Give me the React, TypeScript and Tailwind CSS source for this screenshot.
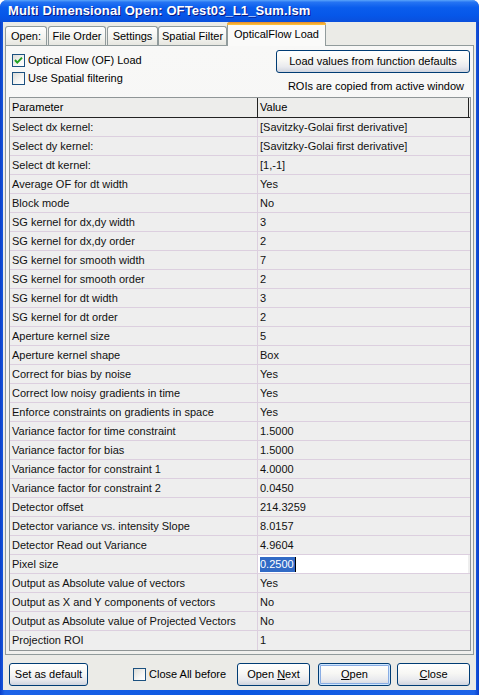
import React from "react";

const rows: [string, string][] = [
  ["Select dx kernel:", "[Savitzky-Golai first derivative]"],
  ["Select dy kernel:", "[Savitzky-Golai first derivative]"],
  ["Select dt kernel:", "[1,-1]"],
  ["Average OF for dt width", "Yes"],
  ["Block mode", "No"],
  ["SG kernel for dx,dy width", "3"],
  ["SG kernel for dx,dy order", "2"],
  ["SG kernel for smooth width", "7"],
  ["SG kernel for smooth order", "2"],
  ["SG kernel for dt width", "3"],
  ["SG kernel for dt order", "2"],
  ["Aperture kernel size", "5"],
  ["Aperture kernel shape", "Box"],
  ["Correct for bias by noise", "Yes"],
  ["Correct low noisy gradients in time", "Yes"],
  ["Enforce constraints on gradients in space", "Yes"],
  ["Variance factor for time constraint", "1.5000"],
  ["Variance factor for bias", "1.5000"],
  ["Variance factor for constraint 1", "4.0000"],
  ["Variance factor for constraint 2", "0.0450"],
  ["Detector offset", "214.3259"],
  ["Detector variance vs. intensity Slope", "8.0157"],
  ["Detector Read out Variance", "4.9604"],
  ["Pixel size", "0.2500"],
  ["Output as Absolute value of vectors", "Yes"],
  ["Output as X and Y components of vectors", "No"],
  ["Output as Absolute value of Projected Vectors", "No"],
  ["Projection ROI", "1"],
];

function CheckBox({ checked }: { checked?: boolean }) {
  return (
    <div className="w-[13px] h-[13px] border border-[#1c5180] bg-[linear-gradient(135deg,#dcdcd7_0%,#f6f6f4_60%,#ffffff_100%)] flex items-center justify-center shrink-0">
      {checked && (
        <svg width="11" height="11" viewBox="0 0 11 11">
          <path d="M2 5 L4.3 7.6 L9 2.6" fill="none" stroke="#21a121" strokeWidth="2" />
        </svg>
      )}
    </div>
  );
}

const btn =
  "h-[23px] border border-[#003c74] rounded-[3px] bg-[linear-gradient(180deg,#ffffff_0%,#f7f7f4_45%,#e9eaee_75%,#cfd4df_100%)] text-[11px] text-black flex items-center justify-center";

function Tab({ label, w, selected, ml }: { label: string; w: string; selected?: boolean; ml?: string }) {
  if (selected) {
    return (
      <div
        className={`${w} ${ml ?? ""} h-[24px] -mb-[1px] relative z-10 border-x border-[#919b9c] rounded-t-[3px] bg-[#fafaf9] flex flex-col`}
      >
        <div className="h-[3px] rounded-t-[3px] bg-[linear-gradient(180deg,#e68b2c_0%,#ffc73c_100%)] -mx-[1px]" />
        <div className="flex-1 flex items-center justify-center text-[11px] text-black pb-[3px]">{label}</div>
      </div>
    );
  }
  return (
    <div
      className={`${w} ${ml ?? ""} h-[19px] border-t border-x border-[#919b9c] rounded-t-[3px] bg-[linear-gradient(180deg,#ffffff_0%,#f3f3ef_60%,#e6e6e0_100%)] flex items-center justify-center text-[11px] text-black`}
    >
      {label}
    </div>
  );
}

export default function App() {
  return (
    <div className="w-[479px] h-[695px] rounded-t-[7px] overflow-hidden flex flex-col bg-[linear-gradient(90deg,#0a3fc8_0%,#1d63e8_1%,#0a56e0_50%,#1d63e8_99%,#0a3fc8_100%)] font-['Liberation_Sans',Arial,sans-serif]">
      {/* Title bar */}
      <div className="h-[22px] shrink-0 bg-[linear-gradient(180deg,#5aa4fa_0%,#2574f3_10%,#0a5ded_35%,#0657e9_70%,#0a4fdc_100%)] flex items-center pl-[8px]">
        <span className="text-white font-bold text-[13px] [text-shadow:1px_1px_0_#0a1883] tracking-[0.1px]">
          Multi Dimensional Open: OFTest03_L1_Sum.lsm
        </span>
      </div>

      {/* Body */}
      <div className="flex-1 mx-[3px] mb-[5px] bg-[#ebebe7] flex flex-col">
        {/* Tabs */}
        <div className="h-[23px] flex items-end pl-[2px]">
          <Tab label="Open:" w="w-[42px]" />
          <Tab label="File Order" w="w-[58px]" ml="ml-[1px]" />
          <Tab label="Settings" w="w-[51px]" ml="ml-[1px]" />
          <Tab label="Spatial Filter" w="w-[69px]" ml="ml-[0px]" />
          <Tab label="OpticalFlow Load" w="w-[99px]" selected />
        </div>

        {/* Panel */}
        <div className="mx-[2px] border border-[#919b9c] bg-[linear-gradient(180deg,#f8f8f7_0%,#f0f0ed_100%)] flex flex-col pb-[3px]">
          <div className="flex pl-[6px] pr-[3px] pt-[4px]">
            <div className="flex flex-col pt-[4px] gap-[5px]">
              <div className="flex items-center h-[13px] gap-[3px] text-[11px] text-black">
                <CheckBox checked />
                <span>Optical Flow (OF) Load</span>
              </div>
              <div className="flex items-center h-[13px] gap-[3px] text-[11px] text-black">
                <CheckBox />
                <span>Use Spatial filtering</span>
              </div>
            </div>
            <div className="ml-auto flex flex-col items-end">
              <div className={`${btn} w-[194px]`}>Load values from function defaults</div>
              <div className="mt-[7px] h-[13px] leading-[13px] pr-[6px] text-[11px] text-black">
                ROIs are copied from active window
              </div>
            </div>
          </div>

          {/* Table */}
          <div className="mt-[4px] ml-[3px] mr-[2px] border border-[#8f9596] bg-[#eeeeee]">
            <div className="h-[20px] flex border-b border-[#222222] bg-[#ededeb]">
              <div className="w-[248px] border-r border-[#222222] pl-[2px] flex items-center text-[11px] text-black">
                Parameter
              </div>
              <div className="flex-1 border-r border-[#222222] mr-[1px] pl-[2px] flex items-center text-[11px] text-black">
                Value
              </div>
            </div>
            {rows.map(([p, v], i) => {
              const last = i === rows.length - 1;
              const sel = p === "Pixel size";
              return (
                <div
                  key={p}
                  className={`h-[19px] flex ${last ? "" : "border-b border-[#dccfdf]"}`}
                >
                  <div className="w-[248px] border-r border-[#dccfdf] pl-[2px] flex items-center text-[11px] text-[#111111] whitespace-nowrap">
                    {p}
                  </div>
                  <div
                    className={`flex-1 pl-[2px] flex items-center text-[11px] whitespace-nowrap mr-[2px] ${
                      sel ? "bg-white" : ""
                    }`}
                  >
                    {sel ? (
                      <span className="flex items-center h-[15px]">
                        <span className="bg-[#316ac5] text-white h-[15px] leading-[15px] pr-[1px]">{v}</span>
                        <span className="w-[1px] h-[15px] bg-black" />
                      </span>
                    ) : (
                      <span className="text-[#111111]">{v}</span>
                    )}
                  </div>
                </div>
              );
            })}
          </div>
        </div>

        {/* Bottom buttons */}
        <div className="flex items-center pt-[8px] pb-[4px] pl-[6px] pr-[6px]">
          <div className={`${btn} w-[79px]`}>Set as default</div>
          <div className="ml-[45px] flex items-center gap-[3px] text-[11px] text-black">
            <CheckBox />
            <span>Close All before</span>
          </div>
          <div className={`${btn} w-[73px] ml-auto`}>
            <span>
              Open <span className="underline">N</span>ext
            </span>
          </div>
          <div className={`${btn} w-[73px] ml-[8px] shadow-[inset_0_0_0_1px_#cee7ff,inset_0_0_0_2px_#89ade4]`}>
            <span>
              <span className="underline">O</span>pen
            </span>
          </div>
          <div className={`${btn} w-[73px] ml-[6px]`}>
            <span>
              <span className="underline">C</span>lose
            </span>
          </div>
        </div>
      </div>
    </div>
  );
}
